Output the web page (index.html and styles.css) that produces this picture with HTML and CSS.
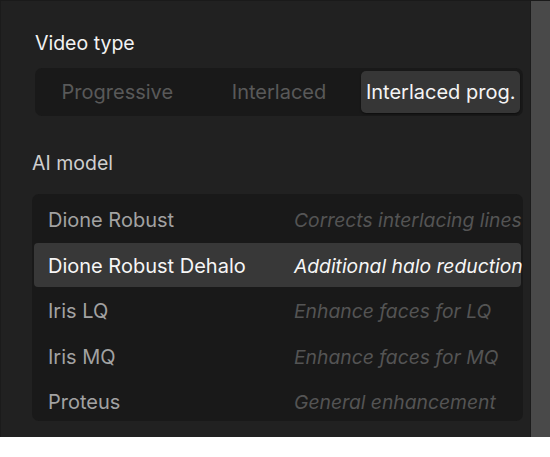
FILE: index.html
```html
<!DOCTYPE html>
<html lang="en">
<head>
<meta charset="utf-8">
<title>Video settings</title>
<link rel="stylesheet" href="styles.css">
</head>
<body>
<div class="window">
  <div class="panel">
    <div class="label label-video">Video type</div>
    <div class="segmented">
      <div class="seg">Progressive</div>
      <div class="seg">Interlaced</div>
      <div class="seg seg-active">Interlaced prog.</div>
    </div>
    <div class="label label-model">AI model</div>
    <div class="list">
      <div class="row"><span class="name">Dione Robust</span><span class="desc">Corrects interlacing lines</span></div>
      <div class="row row-active"><span class="name">Dione Robust Dehalo</span><span class="desc">Additional halo reduction</span></div>
      <div class="row"><span class="name">Iris LQ</span><span class="desc">Enhance faces for LQ</span></div>
      <div class="row"><span class="name">Iris MQ</span><span class="desc">Enhance faces for MQ</span></div>
      <div class="row"><span class="name">Proteus</span><span class="desc">General enhancement</span></div>
    </div>
  </div>
  <div class="scrollbar"></div>
</div>
</body>
</html>
```
FILE: styles.css
```css
* { box-sizing: border-box; }
html, body { margin: 0; padding: 0; background: #ffffff; }
body { font-family: Inter, "Noto Sans", sans-serif; }
.window {
  display: flex;
  width: 550px;
  height: 437px;
  background: #212121;
  border-top: 1px solid #1a1a1a;
}
.panel {
  flex: 1;
  min-width: 0;
  border-left: 1px solid #1b1b1b;
  border-right: 1px solid #1b1b1b;
  padding: 0 7px 0 31px;
}
.scrollbar {
  width: 19px;
  flex: none;
  background: #494949;
}
.label {
  font-size: 19.5px;
  color: #f2f2f2;
  line-height: 22px;
}
.label-video { padding-left: 3px; margin-top: 31px; }
.label-model { color: #cfcfcf; margin-top: 36px; }
.segmented {
  display: flex;
  gap: 3px;
  margin: 14px 0 0 3px;
  height: 48px;
  background: #191919;
  border-radius: 7px;
  padding: 3px;
}
.seg {
  flex: 1 1 0;
  min-width: 0;
  display: flex;
  align-items: center;
  justify-content: center;
  font-size: 20px;
  white-space: nowrap;
  color: #595959;
  border-radius: 5px;
}
.seg-active {
  background: #363636;
  color: #f4f4f4;
  box-shadow: 0 1px 2px rgba(0,0,0,0.5);
}
.list {
  margin-top: 20px;
  background: #191919;
  border-radius: 7px;
  padding: 3px 2px 0;
  width: 491px;
  height: 227px;
  overflow: hidden;
  display: flex;
  flex-direction: column;
  gap: 1.6px;
}
.row {
  display: flex;
  align-items: center;
  flex: none;
  height: 44px;
  padding-top: 2px;
  border-radius: 4px;
  font-size: 20px;
  white-space: nowrap;
}
.name {
  flex: none;
  width: 260px;
  padding-left: 14px;
  color: #a2a2a2;
}
.desc {
  flex: none;
  font-style: italic;
  font-size: 19.3px;
  color: #545454;
}
.row-active { background: #383838; }
.row-active .name, .row-active .desc { color: #f6f6f6; }
```
